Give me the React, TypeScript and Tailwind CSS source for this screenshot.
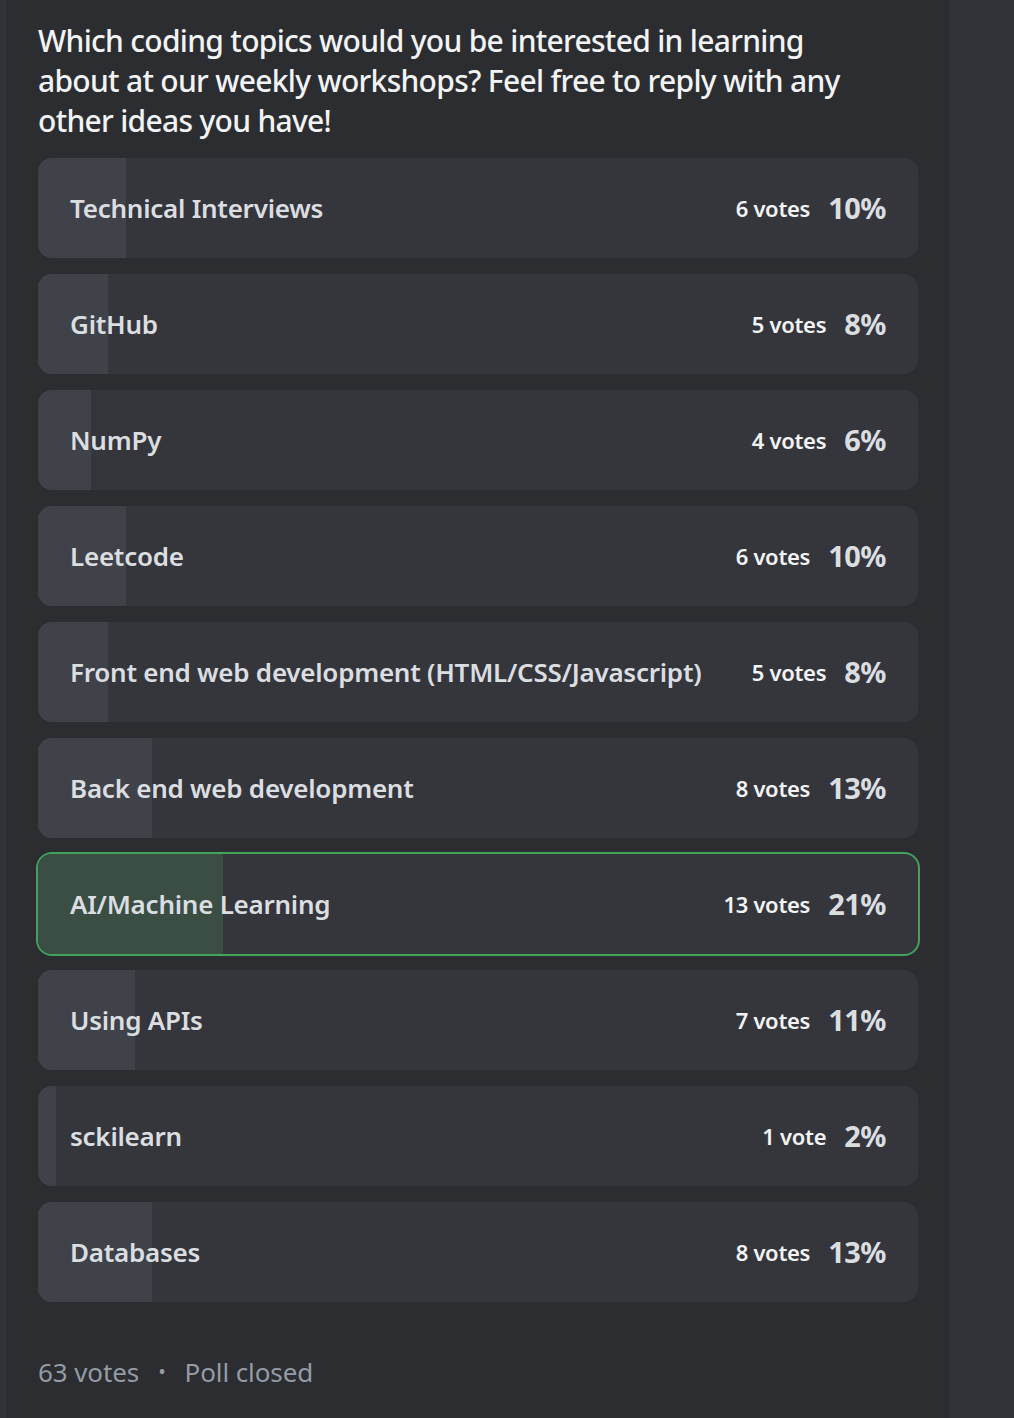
const options = [
  { label: "Technical Interviews", votes: 6, pct: 10 },
  { label: "GitHub", votes: 5, pct: 8 },
  { label: "NumPy", votes: 4, pct: 6 },
  { label: "Leetcode", votes: 6, pct: 10 },
  { label: "Front end web development (HTML/CSS/Javascript)", votes: 5, pct: 8 },
  { label: "Back end web development", votes: 8, pct: 13 },
  { label: "AI/Machine Learning", votes: 13, pct: 21, winner: true },
  { label: "Using APIs", votes: 7, pct: 11 },
  { label: "sckilearn", votes: 1, pct: 2 },
  { label: "Databases", votes: 8, pct: 13 },
];

const App = () => {
  return (
    <div className="min-h-[1418px] bg-[#313338] pl-[6px] font-['Noto_Sans',sans-serif]">
      <div className="w-[943px] min-h-[1418px] bg-[#2b2d31] pl-8 pt-[21px]">
        <h2 className="text-[30px] leading-[40px] font-medium text-[#f2f3f5] tracking-[-0.7px]">
          Which coding topics would you be interested in learning
          <br />
          about at our weekly workshops? Feel free to reply with any
          <br />
          other ideas you have!
        </h2>

        <div className="mt-[17px] flex flex-col gap-4 w-[880px]">
          {options.map((o) => (
            <div
              key={o.label}
              className={
                o.winner
                  ? "relative h-[100px] rounded-[14px] bg-[#35363c] overflow-hidden outline-2 outline-[#43a25a]"
                  : "relative h-[100px] rounded-[14px] bg-[#35363c] overflow-hidden"
              }
            >
              <div
                className={o.winner ? "absolute inset-y-0 left-0 bg-[#3a4e44]" : "absolute inset-y-0 left-0 bg-[#404249]"}
                style={{ width: `${o.pct}%` }}
              />
              <div className="relative h-full flex items-center px-8">
                <span className="flex-1 text-[26px] font-semibold text-[#dbdee1] tracking-[-0.25px]">{o.label}</span>
                <span className="text-[22px] font-semibold text-[#f2f3f5] tracking-[-0.3px]">
                  {o.votes} {o.votes === 1 ? "vote" : "votes"}
                </span>
                <span className="ml-[18px] text-[29px] font-bold text-[#dbdee1] tracking-[-0.5px]">{o.pct}%</span>
              </div>
            </div>
          ))}
        </div>

        <div className="mt-[52px] flex items-center text-[26px] leading-[36px] text-[#949ba4] tracking-[-0.1px]">
          <span>63 votes</span>
          <span className="mx-[19px] text-[20px]">•</span>
          <span>Poll closed</span>
        </div>
      </div>
    </div>
  );
};

export default App;
